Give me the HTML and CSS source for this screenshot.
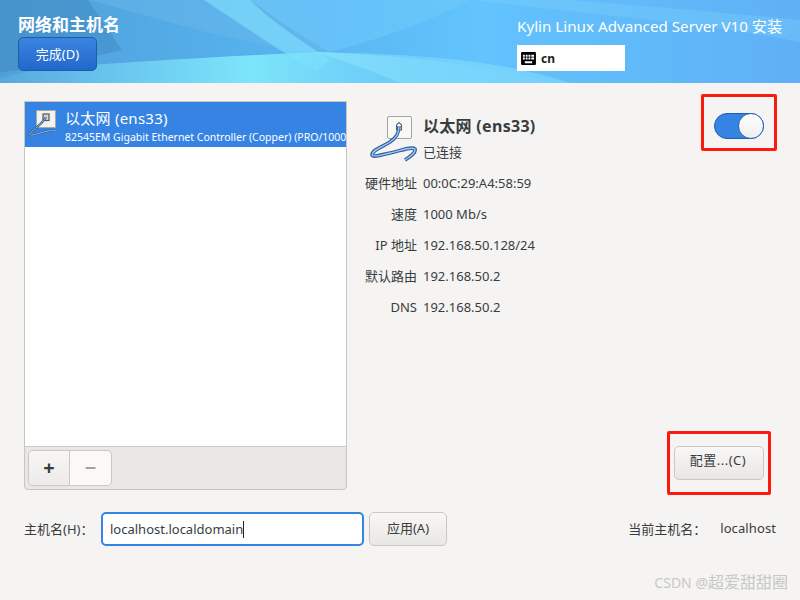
FILE: index.html
```
<!DOCTYPE html>
<html lang="zh">
<head>
<meta charset="utf-8">
<title>网络和主机名</title>
<link rel="stylesheet" href="styles.css">
</head>
<body>
<div class="page">
  <header class="header">
    <svg class="header-art" width="800" height="83" viewBox="0 0 800 83" preserveAspectRatio="none">
      <defs>
        <linearGradient id="base" x1="0" y1="0" x2="1" y2="0">
          <stop offset="0" stop-color="#4f9fd8"/>
          <stop offset="0.3" stop-color="#55b0ec"/>
          <stop offset="0.6" stop-color="#62c3fd"/>
          <stop offset="1" stop-color="#5fb0f6"/>
        </linearGradient>
        <linearGradient id="glow" x1="0" y1="0" x2="1" y2="0">
          <stop offset="0" stop-color="#7fdcf8" stop-opacity="0.15"/>
          <stop offset="0.45" stop-color="#7fe8fb" stop-opacity="0.95"/>
          <stop offset="1" stop-color="#70c8fd" stop-opacity="0.1"/>
        </linearGradient>
      </defs>
      <rect width="800" height="83" fill="url(#base)"/>
      <path d="M0 0H88L122 50L0 78Z" fill="#3f85bd" opacity="0.45"/>
      <path d="M90 0C180 25 250 48 330 53L290 0Z" fill="#68b8ea" opacity="0.5"/>
      <path d="M204 0C250 30 285 55 316 71L330 60C300 40 270 20 250 0Z" fill="#7ddcfb" opacity="0.7"/>
      <path d="M250 0C285 25 310 42 330 52C370 42 430 22 470 0Z" fill="#6fcbfb" opacity="0.55"/>
      <path d="M470 0C600 15 720 25 800 42V20C720 12 640 6 570 0Z" fill="#7fd0fd" opacity="0.35"/>
      <path d="M0 72C120 62 230 56 320 52C400 56 470 62 560 83H0Z" fill="url(#glow)"/>
      <path d="M315 52C420 54 500 60 570 83H400C370 70 340 60 315 52Z" fill="#9aeefc" opacity="0.35"/>
    </svg>
    <div class="header-left">
      <h1 class="title">网络和主机名</h1>
      <button class="done-btn" type="button">完成(D)</button>
    </div>
    <div class="header-right">
      <div class="product">Kylin Linux Advanced Server V10 安装</div>
      <div class="kbd-box">
        <svg class="kbd-icon" width="15" height="13" viewBox="0 0 16 14">
          <path fill="#000" fill-rule="evenodd" d="M1 0H15Q16 0 16 1V13Q16 14 15 14H1Q0 14 0 13V1Q0 0 1 0ZM2 3V5H4V3ZM5 3V5H7V3ZM8 3V5H10V3ZM11 3V5H14V3ZM2 6V8H4V6ZM5 6V8H7V6ZM8 6V8H10V6ZM11 6V8H14V6ZM4 10V12H12V10Z"/>
        </svg>
        <span class="kbd-label">cn</span>
      </div>
    </div>
  </header>

  <main class="main">
    <div class="content">
      <section class="list-panel">
        <div class="list">
          <div class="list-row">
            <svg class="row-icon" width="32" height="34" viewBox="0 0 32 34">
              <rect x="8.500" y="5.500" width="19" height="17" fill="#f2f2f0" stroke="#a8a8a6"/>
              <rect x="15" y="9" width="6" height="6.500" fill="#d8d8d6" stroke="#555" stroke-width="1.200"/>
              <path d="M18 12C14 20 5 24 1.500 29C1 31 6 30 12 28C18 26 24 25 28 26" fill="none" stroke="#2a568f" stroke-width="2.200"/>
              <path d="M18 12C14 20 5 24 1.500 29C1 31 6 30 12 28C18 26 24 25 28 26" fill="none" stroke="#9dbce6" stroke-width="1"/>
            </svg>
            <div class="row-text">
              <div class="row-title">以太网 (ens33)</div>
              <div class="row-sub">82545EM Gigabit Ethernet Controller (Copper) (PRO/1000</div>
            </div>
          </div>
        </div>
        <div class="toolbar">
          <div class="btn-group">
            <button class="tool-btn" type="button">+</button>
            <button class="tool-btn tool-btn-off" type="button">−</button>
          </div>
        </div>
      </section>

      <section class="detail">
        <div class="detail-top">
          <div class="detail-info">
            <div class="device-head">
              <svg class="device-icon" width="48" height="50" viewBox="0 0 48 50">
                <rect x="17.500" y="2.500" width="24" height="22" rx="1.500" fill="#f8f8f6" stroke="#a4a4a2"/>
                <path d="M26.500 16V11L29 8.500L31.500 11V16Z" fill="#fff" stroke="#666" stroke-width="1.100"/>
                <path d="M29 12C29 20 26 24 20 28C12 33 2 36 2 41C3 44 14 40 20 39C30 37 42 32 45 35C46 38 40 43 35 46" fill="none" stroke="#2c5d9f" stroke-width="3.600"/>
                <path d="M29 12C29 20 26 24 20 28C12 33 2 36 2 41C3 44 14 40 20 39C30 37 42 32 45 35C46 38 40 43 35 46" fill="none" stroke="#a4c6f0" stroke-width="1.400"/>
              </svg>
              <div class="device-text">
                <div class="device-name">以太网 (ens33)</div>
                <div class="device-status">已连接</div>
              </div>
            </div>
            <dl class="facts">
              <dt>硬件地址</dt><dd>00:0C:29:A4:58:59</dd>
              <dt>速度</dt><dd>1000 Mb/s</dd>
              <dt>IP 地址</dt><dd>192.168.50.128/24</dd>
              <dt>默认路由</dt><dd>192.168.50.2</dd>
              <dt>DNS</dt><dd>192.168.50.2</dd>
            </dl>
          </div>
          <div class="toggle-box">
            <div class="toggle"><span class="knob"></span></div>
          </div>
        </div>
        <div class="config-row">
          <div class="config-box"><button class="btn config-btn" type="button">配置...(C)</button></div>
        </div>
      </section>
    </div>

    <div class="host-row">
      <label class="host-label">主机名(H)：</label>
      <div class="host-input">localhost.localdomain<span class="caret"></span></div>
      <button class="btn apply-btn" type="button">应用(A)</button>
      <div class="current-host">
        <span>当前主机名：</span>
        <span class="current-value">localhost</span>
      </div>
    </div>
  </main>
  <div class="watermark">CSDN @<span class="watermark-name">超爱甜甜圈</span></div>
</div>
</body>
</html>
```
FILE: styles.css
```
* { box-sizing: border-box; }
html, body { margin: 0; padding: 0; }
body {
  font-family: "Noto Sans", "Noto Sans CJK SC", sans-serif;
  font-size: 13px;
  color: #383d3f;
  background: #f5f4f2;
}
.page { position: relative; width: 800px; height: 600px; overflow: hidden; }
button { font-family: inherit; font-size: inherit; color: inherit; }

.header {
  position: relative;
  height: 83px;
  display: flex;
  justify-content: space-between;
  padding: 12px 18px 0;
}
.header-art { position: absolute; left: 0; top: 0; }
.header-left, .header-right { position: relative; }
.title {
  margin: 0;
  font-size: 17px;
  line-height: 25px;
  font-weight: 700;
  color: #fff;
}
.done-btn {
  display: block;
  width: 79px;
  height: 34px;
  padding: 0 0 2px;
  border: 1px solid #1c5fa8;
  border-radius: 5px;
  background: linear-gradient(#3a84e0, #2268cc);
  color: #fff;
  font-size: 13px;
}
.header-right { width: 265px; display: flex; flex-direction: column; }
.product {
  color: #fff;
  font-size: 15.200px;
  line-height: 28px;
  white-space: nowrap;
}
.kbd-box {
  margin-top: 5px;
  width: 108px;
  height: 26px;
  background: #fff;
  display: flex;
  align-items: center;
  padding-left: 4px;
  gap: 5px;
}
.kbd-label { font-size: 12px; font-weight: 700; color: #222; }

.main { padding: 18px 24px 0; }
.content { display: flex; height: 389px; }
.list-panel {
  width: 323px;
  display: flex;
  flex-direction: column;
  border: 1px solid #c9c5bf;
  border-radius: 0 0 4px 4px;
  background: #e9e6e3;
}
.list { flex: 1; background: #fff; border-bottom: 1px solid #cfcbc6; min-height: 0; }
.list-row {
  height: 45px;
  background: #3584e4;
  color: #fff;
  display: flex;
  align-items: flex-start;
  padding: 3px 0 0 3px;
  gap: 5px;
  overflow: hidden;
}
.row-icon { flex: none; }
.row-text { flex: 1; min-width: 0; white-space: nowrap; padding-top: 2px; }
.row-title { font-size: 15px; line-height: 23px; letter-spacing: 0.250px; }
.row-sub { font-size: 10.500px; line-height: 14px; }
.toolbar { height: 42px; padding: 3px 3px; flex: none; }
.btn-group { display: flex; width: 84px; height: 36px; }
.tool-btn {
  width: 42px;
  height: 36px;
  padding: 0;
  border: 1px solid #cdc7c2;
  border-radius: 5px 0 0 5px;
  background: linear-gradient(#f8f7f6, #edebe9);
  font-size: 20px;
  font-weight: 700;
  line-height: 1;
}
.tool-btn-off {
  border-left: 0;
  border-radius: 0 5px 5px 0;
  background: #faf9f8;
  color: #a2a2a0;
}

.detail { flex: 1; display: flex; flex-direction: column; justify-content: space-between; min-width: 0; }
.detail-top { display: flex; justify-content: space-between; }
.detail-info { padding: 10px 0 0 23px; }
.device-head { display: flex; gap: 5px; align-items: flex-start; height: 56px; }
.device-icon { flex: none; margin-top: 3px; }
.device-text { padding-top: 1px; }
.device-name { font-size: 16px; font-weight: 700; line-height: 28px; letter-spacing: 0.300px; }
.device-status { line-height: 24px; }
.facts {
  display: grid;
  grid-template-columns: 52px auto;
  column-gap: 6px;
  grid-auto-rows: 31px;
  align-items: center;
  margin: 0 0 0 -5px;
}
.facts dt { text-align: right; white-space: nowrap; }
.facts dd { margin: 0; white-space: nowrap; }
.toggle-box {
  margin: -7px -1px 0 0;
  width: 76px;
  height: 57px;
  padding-top: 7px;
  border: 3px solid #fb1a0e;
  border-radius: 2px;
  display: flex;
  align-items: center;
  justify-content: center;
}
.toggle {
  position: relative;
  width: 50px;
  height: 26px;
  border-radius: 13px;
  background: #3584e4;
  border: 1px solid #1b5fae;
}
.knob {
  position: absolute;
  right: -1px;
  top: -1px;
  width: 26px;
  height: 26px;
  border-radius: 50%;
  background: linear-gradient(#fff, #efeeec);
  border: 1px solid #2a6bbd;
}
.config-row { display: flex; justify-content: flex-end; padding-right: 5px; margin-bottom: -5px; }
.config-box {
  width: 104px;
  height: 64px;
  border: 3px solid #fb1a0e;
  border-radius: 2px;
  display: flex;
  align-items: center;
  justify-content: center;
}
.btn {
  height: 34px;
  border: 1px solid #cdc7c2;
  border-radius: 5px;
  background: linear-gradient(#f8f7f6, #e9e7e4);
  padding: 0 0 4px;
}
.config-btn { width: 90px; letter-spacing: 0.500px; padding: 0 2px 7px 0; }

.host-row { display: flex; align-items: center; margin-top: 22px; height: 34px; }
.host-label { width: 77px; padding-bottom: 2px; }
.host-input {
  width: 263px;
  height: 34px;
  border: 2px solid #3584e4;
  border-radius: 5px;
  background: #fff;
  padding-left: 7px;
  line-height: 30px;
  white-space: nowrap;
}
.caret { display: inline-block; width: 1px; height: 17px; background: #222; vertical-align: -4px; }
.apply-btn { width: 78px; margin-left: 5px; }
.current-host { margin-left: auto; display: flex; gap: 14px; padding-bottom: 2px; }
.current-value { letter-spacing: 0.100px; }
.watermark {
  position: absolute;
  right: 12px;
  bottom: 7px;
  font-size: 14px;
  color: #c8c8c6;
  white-space: nowrap;
}
.watermark-name { font-size: 16px; }
```
